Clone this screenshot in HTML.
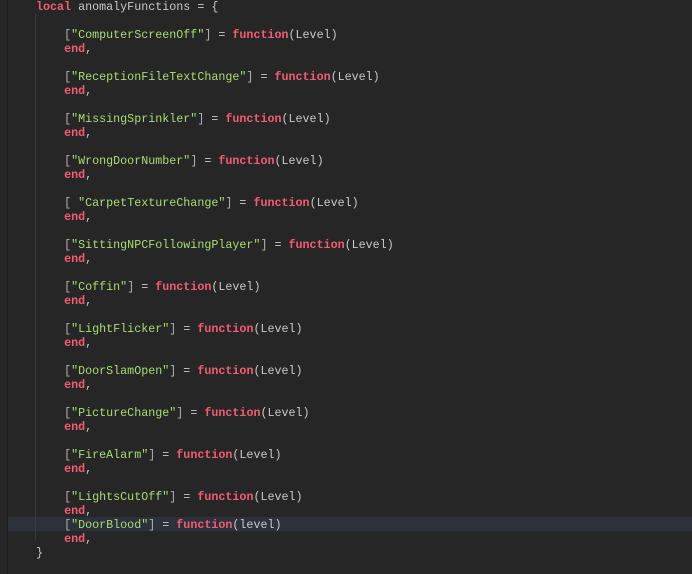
<!DOCTYPE html>
<html><head><style>
html,body{margin:0;padding:0;}
body{width:692px;height:574px;background:#262626;position:relative;overflow:hidden;font-family:"Liberation Mono",monospace;font-size:11.7px;color:#c9c9c9;}
.gut{position:absolute;left:7px;top:0;width:1px;height:574px;background:#1c1c1c;}
.guide{position:absolute;left:35px;top:14px;width:1px;height:526px;background:#3a3a3a;}
.hl{position:absolute;left:8px;top:517px;width:684px;height:14px;background:#2c313c;}
.code{position:absolute;left:36px;top:0px;white-space:pre;line-height:14px;}
.k{color:#f55c74;font-weight:bold;}
.s{color:#a9dc76;}
.p{color:#b0b0b0;}
</style></head><body>
<div class="gut"></div><div class="hl"></div><div class="guide"></div>
<div class="code"><span class="k">local</span> anomalyFunctions = {

    <span class="p">[</span><span class="s">"ComputerScreenOff"</span><span class="p">]</span> = <span class="k">function</span>(Level)
    <span class="k">end</span>,

    <span class="p">[</span><span class="s">"ReceptionFileTextChange"</span><span class="p">]</span> = <span class="k">function</span>(Level)
    <span class="k">end</span>,

    <span class="p">[</span><span class="s">"MissingSprinkler"</span><span class="p">]</span> = <span class="k">function</span>(Level)
    <span class="k">end</span>,

    <span class="p">[</span><span class="s">"WrongDoorNumber"</span><span class="p">]</span> = <span class="k">function</span>(Level)
    <span class="k">end</span>,

    <span class="p">[</span> <span class="s">"CarpetTextureChange"</span><span class="p">]</span> = <span class="k">function</span>(Level)
    <span class="k">end</span>,

    <span class="p">[</span><span class="s">"SittingNPCFollowingPlayer"</span><span class="p">]</span> = <span class="k">function</span>(Level)
    <span class="k">end</span>,

    <span class="p">[</span><span class="s">"Coffin"</span><span class="p">]</span> = <span class="k">function</span>(Level)
    <span class="k">end</span>,

    <span class="p">[</span><span class="s">"LightFlicker"</span><span class="p">]</span> = <span class="k">function</span>(Level)
    <span class="k">end</span>,

    <span class="p">[</span><span class="s">"DoorSlamOpen"</span><span class="p">]</span> = <span class="k">function</span>(Level)
    <span class="k">end</span>,

    <span class="p">[</span><span class="s">"PictureChange"</span><span class="p">]</span> = <span class="k">function</span>(Level)
    <span class="k">end</span>,

    <span class="p">[</span><span class="s">"FireAlarm"</span><span class="p">]</span> = <span class="k">function</span>(Level)
    <span class="k">end</span>,

    <span class="p">[</span><span class="s">"LightsCutOff"</span><span class="p">]</span> = <span class="k">function</span>(Level)
    <span class="k">end</span>,
    <span class="p">[</span><span class="s">"DoorBlood"</span><span class="p">]</span> = <span class="k">function</span>(level)
    <span class="k">end</span>,
}</div>
</body></html>
